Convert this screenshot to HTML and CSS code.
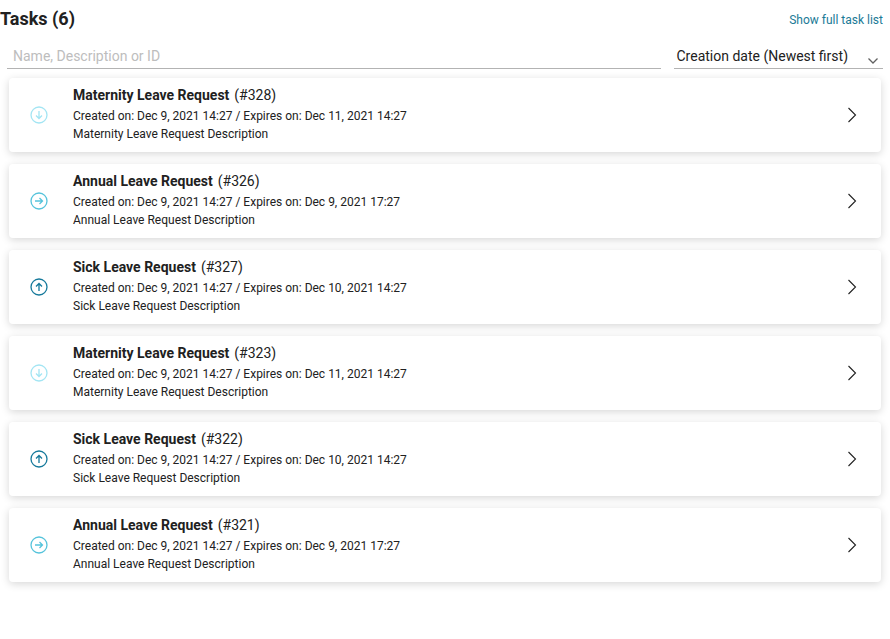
FILE: index.html
```html
<!DOCTYPE html>
<html lang="en">
<head>
<meta charset="utf-8">
<title>Tasks</title>
<link rel="stylesheet" href="styles.css">
</head>
<body>
<svg class="defs" width="0" height="0" aria-hidden="true">
  <symbol id="down" viewBox="0 0 18 18"><circle cx="9" cy="9" r="8" fill="none" stroke="currentColor" stroke-width="1.300"/><path d="M9 5v7.500M6 9.500l3 3 3-3" fill="none" stroke="currentColor" stroke-width="1.300"/></symbol>
  <symbol id="right" viewBox="0 0 18 18"><circle cx="9" cy="9" r="8" fill="none" stroke="currentColor" stroke-width="1.300"/><path d="M5 9h7.500M9.500 6l3 3-3 3" fill="none" stroke="currentColor" stroke-width="1.300"/></symbol>
  <symbol id="up" viewBox="0 0 18 18"><circle cx="9" cy="9" r="8" fill="none" stroke="currentColor" stroke-width="1.300"/><path d="M9 13V5.500M6 8.500l3-3 3 3" fill="none" stroke="currentColor" stroke-width="1.300"/></symbol>
  <symbol id="chev" viewBox="0 0 10 16"><path d="M1.500 1l7 7-7 7" fill="none" stroke="currentColor" stroke-width="1.100"/></symbol>
</svg>
<main class="page">
  <header class="head">
    <h1 class="title">Tasks (6)</h1>
    <a class="link" href="#">Show full task list</a>
  </header>
  <div class="filters">
    <div class="search">Name, Description or ID</div>
    <div class="sort"><span>Creation date (Newest first)</span>
      <svg class="caret" width="12" height="8" viewBox="0 0 12 8"><path d="M1.500 1.500 6 6l4.500-4.500" fill="none" stroke="currentColor" stroke-width="1.300"/></svg>
    </div>
  </div>
  <ul class="list">
    <li class="card">
      <svg class="prio low"><use href="#down"/></svg>
      <div class="body"><div class="name"><b>Maternity Leave Request</b><span class="id">(#328)</span></div>
      <div class="line">Created on: Dec 9, 2021 14:27 / Expires on: Dec 11, 2021 14:27</div>
      <div class="line">Maternity Leave Request Description</div></div>
      <svg class="go"><use href="#chev"/></svg>
    </li>
    <li class="card">
      <svg class="prio mid"><use href="#right"/></svg>
      <div class="body"><div class="name"><b>Annual Leave Request</b><span class="id">(#326)</span></div>
      <div class="line">Created on: Dec 9, 2021 14:27 / Expires on: Dec 9, 2021 17:27</div>
      <div class="line">Annual Leave Request Description</div></div>
      <svg class="go"><use href="#chev"/></svg>
    </li>
    <li class="card">
      <svg class="prio high"><use href="#up"/></svg>
      <div class="body"><div class="name"><b>Sick Leave Request</b><span class="id">(#327)</span></div>
      <div class="line">Created on: Dec 9, 2021 14:27 / Expires on: Dec 10, 2021 14:27</div>
      <div class="line">Sick Leave Request Description</div></div>
      <svg class="go"><use href="#chev"/></svg>
    </li>
    <li class="card">
      <svg class="prio low"><use href="#down"/></svg>
      <div class="body"><div class="name"><b>Maternity Leave Request</b><span class="id">(#323)</span></div>
      <div class="line">Created on: Dec 9, 2021 14:27 / Expires on: Dec 11, 2021 14:27</div>
      <div class="line">Maternity Leave Request Description</div></div>
      <svg class="go"><use href="#chev"/></svg>
    </li>
    <li class="card">
      <svg class="prio high"><use href="#up"/></svg>
      <div class="body"><div class="name"><b>Sick Leave Request</b><span class="id">(#322)</span></div>
      <div class="line">Created on: Dec 9, 2021 14:27 / Expires on: Dec 10, 2021 14:27</div>
      <div class="line">Sick Leave Request Description</div></div>
      <svg class="go"><use href="#chev"/></svg>
    </li>
    <li class="card">
      <svg class="prio mid"><use href="#right"/></svg>
      <div class="body"><div class="name"><b>Annual Leave Request</b><span class="id">(#321)</span></div>
      <div class="line">Created on: Dec 9, 2021 14:27 / Expires on: Dec 9, 2021 17:27</div>
      <div class="line">Annual Leave Request Description</div></div>
      <svg class="go"><use href="#chev"/></svg>
    </li>
  </ul>
</main>
</body>
</html>
```
FILE: styles.css
```css
* { box-sizing: border-box; }
html, body { margin: 0; background: #fff; }
body { font-family: Roboto, "Liberation Sans", sans-serif; color: #212121; overflow: hidden; }
.defs { position: absolute; }
.page { width: 883px; height: 639px; }
.head { display: flex; justify-content: space-between; align-items: flex-start; height: 44px; }
.title { margin: 7px 0 0; font-size: 18px; line-height: 24px; font-weight: 700; }
.link { margin-top: 12px; font-size: 12px; line-height: 16px; color: #1b7a96; text-decoration: none; }
.filters { display: flex; justify-content: space-between; margin-left: 7px; height: 25px; }
.search, .sort { border-bottom: 1px solid #b3b3b3; font-size: 14px; line-height: 24px; }
.search { width: 654px; padding-left: 6px; color: #bdbdbd; }
.sort { width: 209px; padding-left: 2.5px; display: flex; justify-content: space-between; }
.caret { margin: 13px 4px 0 0; color: #616161; }
.list { list-style: none; margin: 9px 0 0 9px; padding: 0; width: 872px; display: flex; flex-direction: column; gap: 12px; }
.card { height: 74px; display: flex; align-items: center; background: #fff; border-radius: 4px; box-shadow: 0 2px 8px rgba(0,0,0,.16); padding-left: 21px; }
.prio { width: 18px; height: 18px; flex: none; }
.low { color: #a3e5f3; }
.mid { color: #55c3db; }
.high { color: #15799b; }
.body { flex: 1; margin-left: 25px; }
.name { font-size: 14px; line-height: 18px; margin-bottom: 3px; }
.name b { font-weight: 700; }
.id { margin-left: 5px; }
.line { font-size: 12px; line-height: 19px; }
.line + .line { margin-top: -1px; }
.go { width: 10px; height: 16px; flex: none; margin-right: 24px; color: #212121; }
```
